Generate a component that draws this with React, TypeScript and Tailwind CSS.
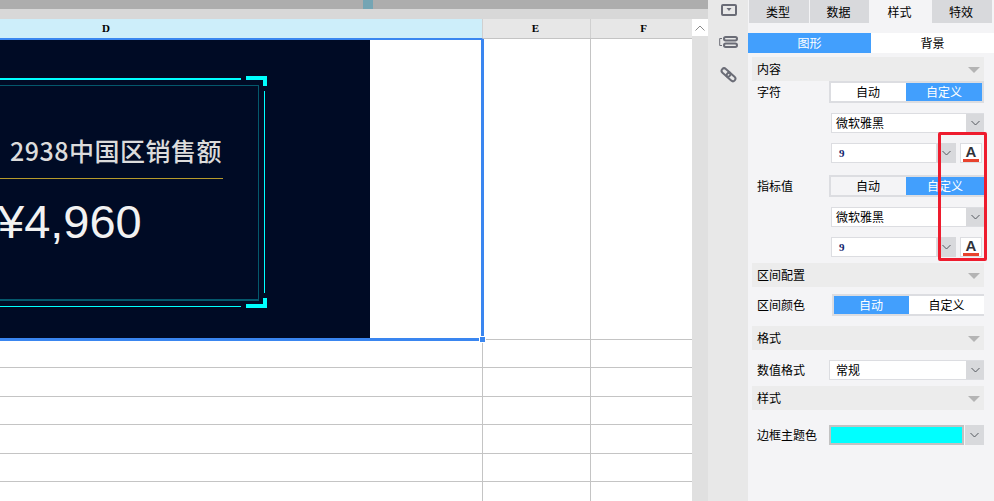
const cjk = "font-['Noto_Sans_CJK_SC','Liberation_Sans',sans-serif]";

function Chevron() {
  return (
    <svg width="9" height="6" viewBox="0 0 9 6" fill="none" stroke="#55585f" strokeWidth="1">
      <path d="M0.5 1 L4.5 5 L8.5 1" />
    </svg>
  );
}

function Section({ title, className }: { title: string; className?: string }) {
  return (
    <div className={`flex h-6 items-center justify-between bg-[#ececec] pl-[5px] pr-[3px] text-[12px] text-black ${className ?? ""}`}>
      <span>{title}</span>
      <span className="mr-[1px] mt-[1px] h-0 w-0 border-x-[6px] border-t-[6px] border-x-transparent border-t-[#b4b4b4]" />
    </div>
  );
}

function Toggle({ left, active, white, closed, className }: { left: string; active: "auto" | "custom"; white?: boolean; closed?: boolean; className?: string }) {
  return (
    <div className={`flex h-[22px] border-2 border-[#dcdde1] text-[12px] ${closed ? "" : "border-r-0"} ${className ?? ""}`}>
      <div className={`flex w-[75px] items-center justify-center pr-[1px] ${active === "auto" ? "bg-[#429ffd] text-white" : white ? "bg-white text-black" : "text-black"}`}>{left}</div>
      <div className={`flex flex-1 items-center justify-center ${active === "custom" ? "bg-[#429ffd] text-white" : "bg-white text-black"}`}>自定义</div>
    </div>
  );
}

function FontSelect({ label, className }: { label: string; className?: string }) {
  return (
    <div className={`flex h-5 border-y border-l border-[#dcdde1] bg-white text-[12px] text-black ${className ?? ""}`}>
      <span className="flex flex-1 items-center pl-1">{label}</span>
      <span className="flex w-[18px] items-center justify-center bg-[#d8d9dc]"><Chevron /></span>
    </div>
  );
}

function SizeRow({ className }: { className?: string }) {
  return (
    <div className={`ml-[83px] flex h-5 ${className ?? ""}`}>
      <div className="flex w-[106px] items-center border border-[#dcdde1] bg-white pl-[7px] font-['Liberation_Serif',serif] text-[11px] font-bold text-[#13246e]">9</div>
      <span className="flex w-[19px] items-center justify-center bg-[#d8d9dc]"><Chevron /></span>
      <div className="ml-[4px] flex w-[22px] flex-col items-center border border-[#dcdde1] bg-white">
        <span className="h-[13px] font-['Liberation_Sans',sans-serif] text-[15px] font-bold leading-[15px] text-[#30323a]">A</span>
        <span className="mt-[2px] h-1 w-4 bg-[#e8432e]" />
      </div>
    </div>
  );
}

function GridRow({ h }: { h: string }) {
  return (
    <div className={`flex shrink-0 border-b border-[#c4c4c4] ${h}`}>
      <div className="w-[483px] border-r border-[#c4c4c4]" />
      <div className="w-[108px] border-r border-[#c4c4c4]" />
      <div className="flex-1" />
    </div>
  );
}

function Corner({ bottom }: { bottom?: boolean }) {
  return (
    <div className={`absolute left-[246px] h-[10px] w-[21px] border-r-[4px] border-[#00ffff] ${bottom ? "top-[258px] border-b-[4px]" : "top-[36px] border-t-[4px]"}`} />
  );
}

function Chart() {
  return (
    <div className="relative h-[298px] w-[370px] bg-[#000b25] pl-[10px] pt-[93px]">
      <div className="absolute left-0 top-[38px] h-[2px] w-[241px] bg-[#00ffff]" />
      <Corner />
      <div className="absolute left-[264px] top-[51px] h-[202px] w-[1px] bg-[#00ffff]" />
      <div className="absolute left-[-5px] top-[45px] h-[216px] w-[264px] border border-b-2 border-[#04586c]" />
      <Corner bottom />
      <div className="absolute left-0 top-[266px] h-[1px] w-[241px] bg-[#00ffff]" />
      <div className={`relative text-[25px] font-medium leading-[34px] tracking-[0.5px] text-[#dcdcdc] ${cjk}`}>2938中国区销售额</div>
      <div className="ml-[-10px] mt-[11px] h-[1px] w-[223px] bg-[#b59a2b]" />
      <div className="ml-[-12px] mt-[15px] font-['Liberation_Sans',sans-serif] text-[47px] font-medium leading-[56px] text-[#f2f2f2]">¥4,960</div>
    </div>
  );
}

export default function App() {
  return (
    <div className={`relative flex h-[501px] w-[994px] overflow-hidden bg-white ${cjk}`}>
      <div className="flex w-[708px] flex-col">
        <div className="flex h-[9px] bg-[#adadad]">
          <div className="ml-[363px] w-[10px] bg-[#74a5b4]" />
        </div>
        <div className="h-[10px] bg-[#d8d8d8]" />
        <div className="flex flex-1">
          <div className="relative flex w-[692px] flex-col">
            <div className="flex h-5 shrink-0 border-b border-[#c4c4c4] bg-[#e7e7e7] font-['Liberation_Serif',serif] text-[11px] font-bold text-black">
              <div className="relative z-10 mb-[-1px] flex w-[483px] items-center border-b border-r border-b-[#3a86f0] border-r-[#d0d0d0] bg-[#cdeefa] pl-[102px]">
                D
              </div>
              <div className="flex w-[108px] items-center justify-center border-r border-[#d0d0d0] pr-[2px]">E</div>
              <div className="flex flex-1 items-center justify-center pl-[4px]">F</div>
            </div>
            <div className="flex h-[301px] shrink-0">
              <div className="relative z-10 mb-[-1px] mr-[-1px] w-[484px] border-b-[3px] border-r-[3px] border-t border-[#3a86f0]">
                <Chart />
                <div className="absolute bottom-[-5px] right-[-5px] h-[7px] w-[7px] border border-white bg-[#3a86f0]" />
              </div>
              <div className="w-[108px] border-b border-r border-[#c4c4c4]" />
              <div className="flex-1 border-b border-[#c4c4c4]" />
            </div>
            <GridRow h="h-[28px]" />
            <GridRow h="h-[29px]" />
            <GridRow h="h-[28px]" />
            <GridRow h="h-[29px]" />
            <GridRow h="h-[28px]" />
            <div className="flex h-[19px] shrink-0">
              <div className="w-[483px] border-r border-[#c4c4c4]" />
              <div className="w-[108px] border-r border-[#c4c4c4]" />
            </div>
          </div>
          <div className="flex w-[16px] flex-col bg-[#e0e0e0]">
            <div className="flex h-[17px] items-center justify-center bg-white">
              <svg width="10" height="6" viewBox="0 0 10 6" fill="none" stroke="#8a8a8a" strokeWidth="1">
                <path d="M0.5 5.5 L5 1 L9.5 5.5" />
              </svg>
            </div>
          </div>
        </div>
      </div>

      <div className="flex w-[40px] flex-col items-center bg-[#e8e8e8] pl-[1px] pt-[4px]">
        <svg width="16" height="12" viewBox="0 0 16 12" fill="none">
          <rect x="1" y="1" width="14" height="10" rx="1" stroke="#6a6c76" strokeWidth="2" />
          <path d="M5.5 4 H10.5 L8 7 Z" fill="#6a6c76" />
        </svg>
        <svg className="mt-[20px]" width="19" height="12" viewBox="0 0 19 12" fill="none" stroke="#6a6c76">
          <path d="M3 2.5 H0.7 V9.5 H3" strokeWidth="1" />
          <rect x="5" y="1" width="13" height="3.5" rx="1.75" strokeWidth="2" />
          <rect x="5" y="7.5" width="13" height="3.5" rx="1.75" strokeWidth="2" />
        </svg>
        <svg className="mt-[18px]" width="17" height="17" viewBox="0 0 17 17" fill="none" stroke="#6a6c76" strokeWidth="2">
          <rect x="-5" y="-2.5" width="10" height="5" rx="2.5" transform="translate(6 6.5) rotate(42)" />
          <rect x="-5" y="-2.5" width="10" height="5" rx="2.5" transform="translate(11 11) rotate(42)" />
        </svg>
      </div>

      <div className="flex w-[246px] flex-col bg-[#f4f4f6] text-[12px] text-black">
        <div className="flex h-[23px] gap-[1px] pl-[1px] pr-[2px] text-[12px]">
          <div className="flex w-[60px] items-center justify-center bg-[#d8d9dc] pr-[2px]">类型</div>
          <div className="flex w-[59px] items-center justify-center bg-[#d8d9dc] pr-[2px]">数据</div>
          <div className="flex w-[61px] items-center justify-center pr-[2px]">样式</div>
          <div className="flex w-[60px] items-center justify-center bg-[#d8d9dc] pr-[2px]">特效</div>
        </div>
        <div className="mt-[10px] flex h-5">
          <div className="flex w-[123px] items-center justify-center bg-[#429ffd] text-white">图形</div>
          <div className="flex flex-1 items-center justify-center bg-white">背景</div>
        </div>
        <div className="mx-[4px] mt-[4px] flex flex-col pr-[6px]">
          <Section title="内容" />
        </div>
        <div className="flex items-center">
          <span className="w-[81px] pl-[9px] text-[12px]">字符</span>
          <Toggle left="自动" active="custom" white closed className="w-[155px]" />
        </div>
        <FontSelect label="微软雅黑" className="ml-[83px] mr-[10px] mt-[10px]" />
        <SizeRow className="mt-[10px]" />
        <div className="mt-[12px] flex items-center">
          <span className="w-[81px] pl-[9px]">指标值</span>
          <Toggle left="自动" active="custom" className="w-[155px]" />
        </div>
        <FontSelect label="微软雅黑" className="ml-[83px] mr-[10px] mt-[10px]" />
        <SizeRow className="mt-[10px]" />
        <div className="mx-[4px] mt-[6px] pr-[6px]">
          <Section title="区间配置" />
        </div>
        <div className="mt-[7px] flex items-center">
          <span className="w-[84px] pl-[9px]">区间颜色</span>
          <Toggle left="自动" active="auto" className="w-[152px]" />
        </div>
        <div className="mx-[4px] mt-[10px] pr-[6px]">
          <Section title="格式" />
        </div>
        <div className="mt-[10px] flex items-center">
          <span className="w-[81px] pl-[9px]">数值格式</span>
          <FontSelect label="常规" className="mr-[10px] flex-1 pl-[2px]" />
        </div>
        <div className="mx-[4px] mt-[6px] pr-[6px]">
          <Section title="样式" />
        </div>
        <div className="mt-[15px] flex items-center">
          <span className="w-[81px] pl-[9px]">边框主题色</span>
          <div className="mr-[10px] flex h-5 flex-1">
            <div className="flex-1 border-2 border-[#c2c2c2] bg-[#00ffff]" />
            <span className="ml-[1px] flex w-[19px] items-center justify-center bg-[#d8d9dc]"><Chevron /></span>
          </div>
        </div>
      </div>

      <div className="pointer-events-none absolute left-[938px] top-[132px] h-[129px] w-[49px] rounded-[2px] border-[3px] border-[#ee1c2e]" />
    </div>
  );
}
